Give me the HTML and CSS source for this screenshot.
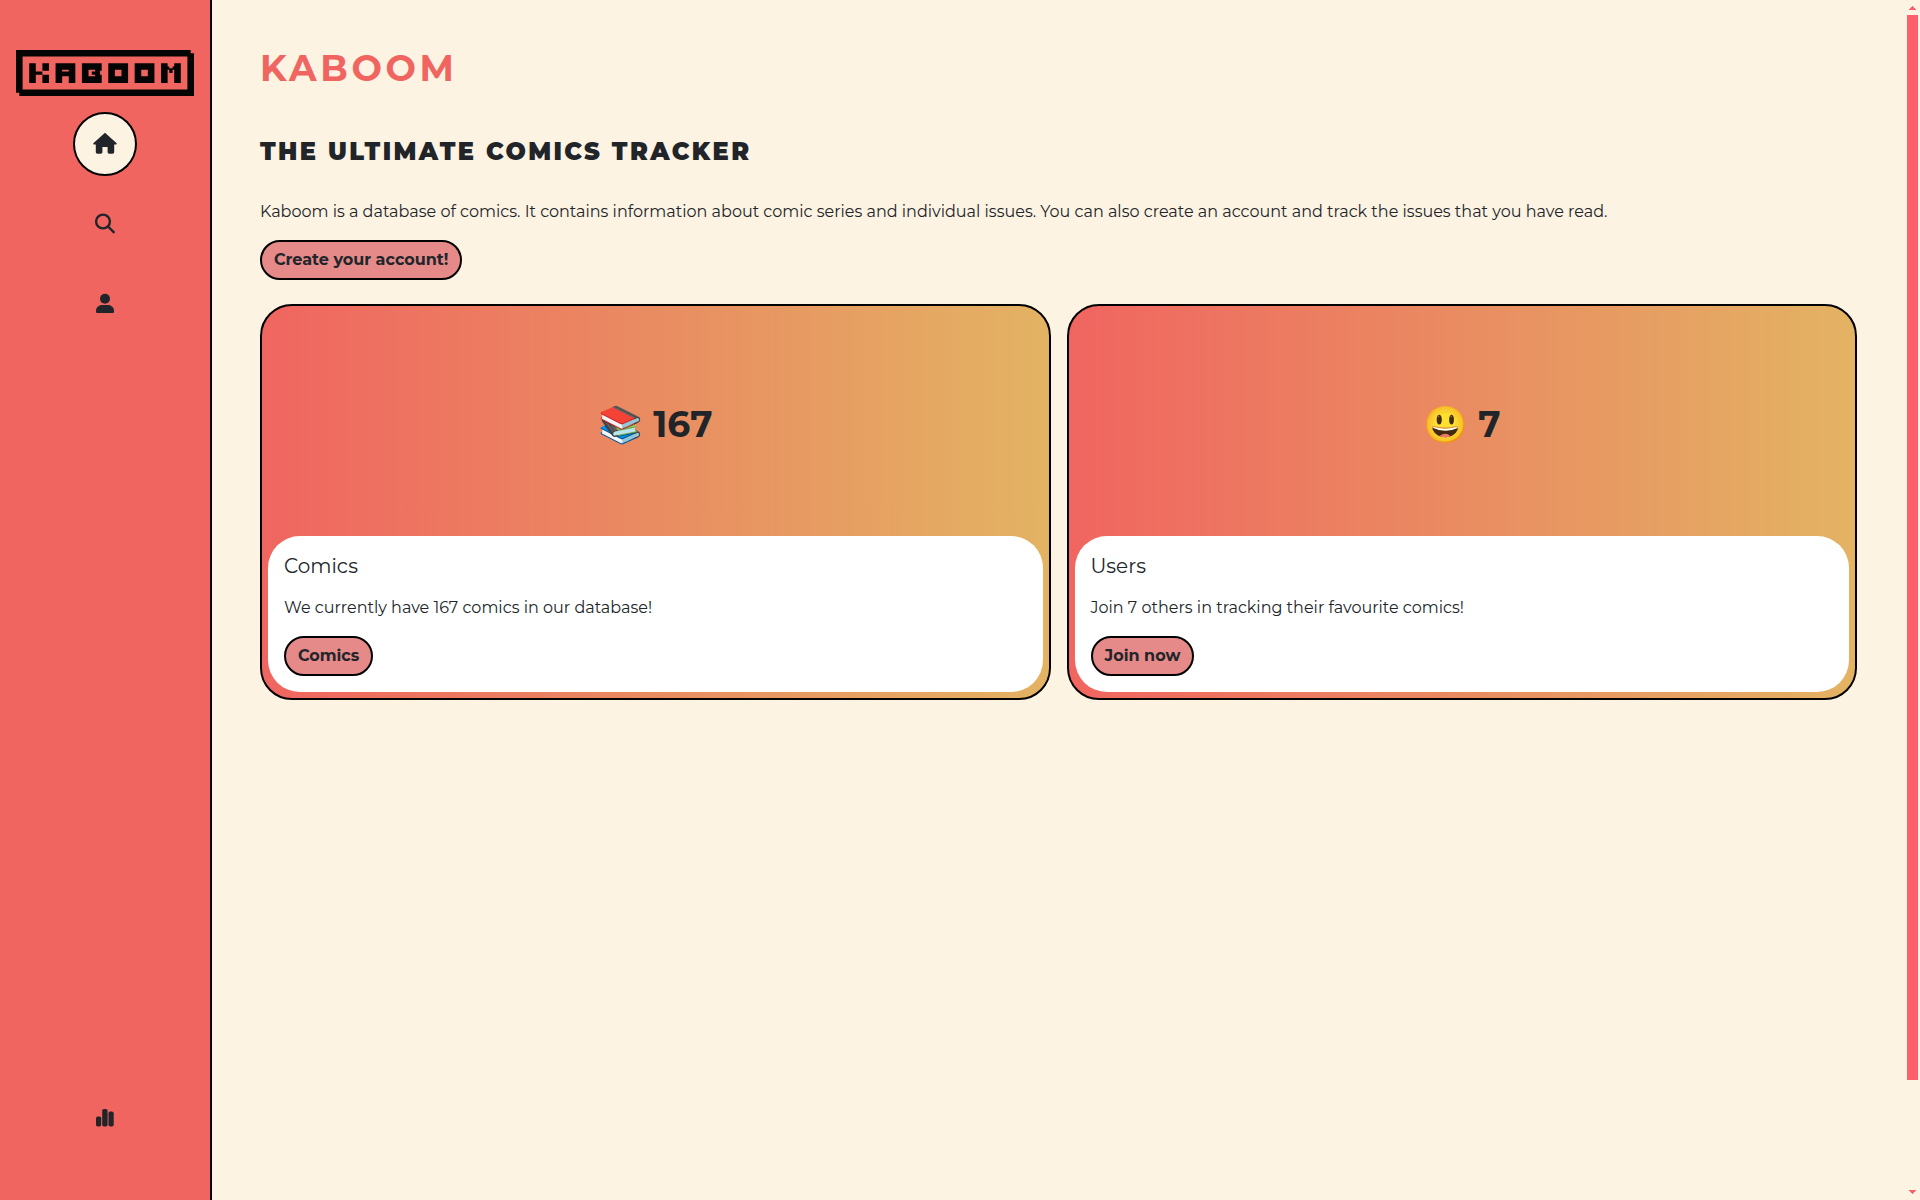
FILE: index.html
```html
<!DOCTYPE html>
<html lang="en">
<head>
<meta charset="utf-8">
<meta name="viewport" content="width=device-width, initial-scale=1">
<title>Kaboom</title>
<link rel="stylesheet" href="styles.css">
</head>
<body>
<div class="app">
  <nav class="sidebar" aria-label="Main">
    <a class="logo" href="#" aria-label="Kaboom">
      <svg viewBox="0 0 54 14" fill="#050505" aria-hidden="true">
        <path fill-rule="evenodd" d="M0 0H53V1H54V14H1V13H0ZM2 2V12H52V2Z"/>
        <path d="M4 4H6V6.500H8V4H10V6.300H8V7.500H10V10H8V7.500H6V10H4Z"/>
        <path fill-rule="evenodd" d="M12 4H18V10H16V8H14V10H12ZM14 6V6.500H16V6Z"/>
        <path fill-rule="evenodd" d="M20 4H26V6.300H25.500V7.500H26V10H20ZM22 6V8H24V7.500H23V6.500H24V6Z"/>
        <path fill-rule="evenodd" d="M28 4H34V10H28ZM30 6V8H32V6Z"/>
        <path fill-rule="evenodd" d="M36 4H42V10H36ZM38 6V8H40V6Z"/>
        <path d="M44 4H46V5H46.500V5.500H47.500V5H48V4H50V10H48V6H47.500V7H46.500V6H46V10H44Z"/>
      </svg>
    </a>
    <a class="nav-link active" href="#" aria-label="Home">
      <svg viewBox="0 0 24 24" aria-hidden="true"><path d="M12 .8 23.400 11c.8.8.3 1.600-.6 1.600H21.200V20.100c0 1-.7 1.700-1.700 1.700H16.300c-1 0-1.700-.7-1.700-1.700V14.900H9.400V20.100c0 1-.7 1.700-1.700 1.700H4.500c-1 0-1.700-.7-1.700-1.700V12.600H1.200c-.9 0-1.400-.8-.6-1.600Z"/></svg>
    </a>
    <a class="nav-link" href="#" aria-label="Search">
      <svg class="stroked" viewBox="0 0 20 20" aria-hidden="true"><circle cx="8" cy="7.500" r="6.900"/><path d="M13 12.500 18.700 18.200"/></svg>
    </a>
    <a class="nav-link" href="#" aria-label="Account">
      <svg viewBox="0 0 20 20" aria-hidden="true"><circle cx="10" cy="4.700" r="5"/><path d="M1 18V16.500c0-3 2.700-5.500 6-5.500h6c3.300 0 6 2.500 6 5.500V18q0 1-1 1H2q-1 0-1-1Z"/></svg>
    </a>
    <a class="nav-link last" href="#" aria-label="Statistics">
      <svg viewBox="0 0 20 20" aria-hidden="true"><rect x="1" y="8.500" width="5.200" height="10" rx="1.800"/><rect x="7.200" y="1" width="5.400" height="17.500" rx="1.800"/><rect x="13.500" y="3.400" width="5.200" height="15.100" rx="1.800"/></svg>
    </a>
  </nav>
  <main class="content">
    <h1>KABOOM</h1>
    <h2>THE ULTIMATE COMICS TRACKER</h2>
    <p class="intro">Kaboom is a database of comics. It contains information about comic series and individual issues. You can also create an account and track the issues that you have read.</p>
    <a class="btn" href="#">Create your account!</a>
    <div class="cards">
      <section class="card">
        <div class="stat">📚 167</div>
        <div class="card-body">
          <h3>Comics</h3>
          <p>We currently have 167 comics in our database!</p>
          <a class="btn" href="#">Comics</a>
        </div>
      </section>
      <section class="card">
        <div class="stat">😃 7</div>
        <div class="card-body">
          <h3>Users</h3>
          <p>Join 7 others in tracking their favourite comics!</p>
          <a class="btn" href="#">Join now</a>
        </div>
      </section>
    </div>
  </main>
  <div class="scrollbar" aria-hidden="true">
    <svg viewBox="0 0 7 4"><path d="M3 0H4V1H5V2H6V3H7V4H0V3H1V2H2V1H3Z"/></svg>
    <div class="track"><div class="thumb"></div></div>
    <svg viewBox="0 0 7 4"><path d="M0 0H7V1H6V2H5V3H4V4H3V3H2V2H1V1H0Z"/></svg>
  </div>
</div>
</body>
</html>
```
FILE: styles.css
```css
* { box-sizing: border-box; }

body {
  margin: 0;
  background: #fdf3e3;
  color: #212529;
  font: 400 16px/24px Montserrat, Inter, sans-serif;
}

.app {
  display: flex;
  min-height: 100vh;
}

.sidebar {
  flex: 0 0 212px;
  display: flex;
  flex-direction: column;
  align-items: center;
  padding: 50px 16px;
  background: #f06560;
  border-right: 2px solid #000;
}

.logo {
  width: 100%;
  margin-bottom: 16px;
}

.logo svg { display: block; width: 100%; }

.nav-link {
  display: grid;
  place-items: center;
  width: 64px;
  height: 64px;
  margin-bottom: 16px;
  border: 2px solid transparent;
  border-radius: 50%;
}

.nav-link.active {
  background: #fdf3e3;
  border-color: #000;
}

.nav-link.last { margin: auto 0 0; }

.nav-link svg {
  width: 20px;
  height: 20px;
  fill: #212529;
  overflow: visible;
}

.nav-link.active svg { width: 24px; height: 24px; }

.nav-link .stroked {
  fill: none;
  stroke: #212529;
  stroke-width: 2.4;
  stroke-linecap: round;
}

.content {
  flex: 1;
  min-width: 0;
  padding: 44px 48px;
}

h1, h2, h3, p { margin: 0; }

h1 {
  margin-bottom: 44px;
  color: #f06560;
  font-size: 36px;
  font-weight: 700;
  line-height: 48px;
  letter-spacing: 0.1em;
}

h2 {
  margin-bottom: 32px;
  font-size: 24px;
  font-weight: 900;
  line-height: 32px;
  letter-spacing: 0.1em;
}

.intro { margin-bottom: 16px; }

.btn {
  display: inline-block;
  padding: 6px 12px;
  border: 2px solid #000;
  border-radius: 20px;
  background: #e68a89;
  color: #212529;
  font-weight: 700;
  text-decoration: none;
}

.cards {
  display: grid;
  grid-template-columns: 1fr 1fr;
  gap: 16px;
  margin-top: 24px;
}

.card {
  padding: 6px;
  border: 2px solid #000;
  border-radius: 32px;
  background: linear-gradient(90deg, #f06560, #e3b363);
}

.stat {
  display: grid;
  place-items: center;
  height: 224px;
  font-size: 36px;
  font-weight: 700;
}

.card-body {
  padding: 16px;
  border-radius: 32px;
  background: #fff;
}

h3 {
  margin-bottom: 16px;
  font-size: 20px;
  font-weight: 400;
  line-height: 28px;
}

.card-body p { margin-bottom: 16px; }

.scrollbar {
  position: sticky;
  top: 0;
  display: flex;
  flex-direction: column;
  align-items: center;
  flex: 0 0 11px;
  height: 100vh;
  margin: 0 2px;
  padding: 6px 0;
}

.scrollbar svg { width: 7px; height: 4px; fill: #ff5e6c; }

.track {
  flex: 1;
  align-self: stretch;
  margin: 5px 0;
}

.thumb {
  height: 91%;
  background: #ff5e6c;
}
```
